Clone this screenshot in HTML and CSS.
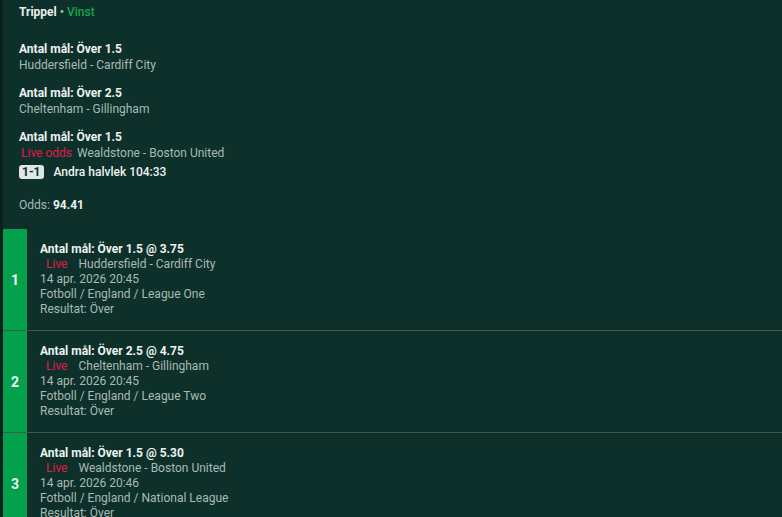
FILE: index.html
```html
<!DOCTYPE html>
<html lang="sv">
<head>
<meta charset="utf-8">
<link rel="stylesheet" href="styles.css">
</head>
<body>
<div class="page">
  <section class="summary">
    <div class="head"><span class="type">Trippel</span> <span class="dot">•</span> <span class="win">Vinst</span></div>
    <div class="sel">
      <div class="market">Antal mål: Över 1.5</div>
      <div class="match">Huddersfield - Cardiff City</div>
    </div>
    <div class="sel">
      <div class="market">Antal mål: Över 2.5</div>
      <div class="match">Cheltenham - Gillingham</div>
    </div>
    <div class="sel">
      <div class="market">Antal mål: Över 1.5</div>
      <div class="match"><span class="live-odds">Live odds</span> Wealdstone - Boston United</div>
      <div class="score-row"><span class="score">1-1</span><span class="period">Andra halvlek 104:33</span></div>
    </div>
    <div class="odds">Odds: <b>94.41</b></div>
  </section>
  <section class="legs">
    <div class="leg">
      <div class="num">1</div>
      <div class="info">
        <div class="title">Antal mål: Över 1.5 @ 3.75</div>
        <div class="line"><span class="live">Live</span>Huddersfield - Cardiff City</div>
        <div class="line">14 apr. 2026 20:45</div>
        <div class="line">Fotboll / England / League One</div>
        <div class="line">Resultat: Över</div>
      </div>
    </div>
    <div class="leg">
      <div class="num">2</div>
      <div class="info">
        <div class="title">Antal mål: Över 2.5 @ 4.75</div>
        <div class="line"><span class="live">Live</span>Cheltenham - Gillingham</div>
        <div class="line">14 apr. 2026 20:45</div>
        <div class="line">Fotboll / England / League Two</div>
        <div class="line">Resultat: Över</div>
      </div>
    </div>
    <div class="leg">
      <div class="num">3</div>
      <div class="info">
        <div class="title">Antal mål: Över 1.5 @ 5.30</div>
        <div class="line"><span class="live">Live</span>Wealdstone - Boston United</div>
        <div class="line">14 apr. 2026 20:46</div>
        <div class="line">Fotboll / England / National League</div>
        <div class="line">Resultat: Över</div>
      </div>
    </div>
  </section>
</div>
</body>
</html>
```

FILE: styles.css
```css
html, body {
  margin: 0;
  padding: 0;
  background: #0b211d;
}
body {
  font-family: Roboto, "Liberation Sans", Arial, sans-serif;
  font-size: 12px;
  color: #a9bab5;
}
.page {
  margin-left: 3px;
  background: #0d312a;
  min-height: 517px;
}
.summary {
  padding: 4px 16px 16px 16px;
}
.head {
  font-weight: 700;
  color: #e8eeec;
  line-height: 16px;
}
.dot { color: #a9bab5; }
.win { color: #16a551; font-weight: 500; }
.sel {
  margin-top: 12px;
}
.head + .sel { margin-top: 21px; }
.market {
  font-weight: 700;
  color: #eef2f1;
  line-height: 16px;
}
.match {
  line-height: 16px;
}
.live-odds {
  color: #e4164d;
  margin-left: 2px;
  margin-right: 2px;
}
.score-row {
  display: flex;
  align-items: center;
  gap: 10px;
  margin-top: 4px;
}
.score {
  background: #dfe6e4;
  color: #0d312a;
  font-weight: 700;
  border-radius: 3px;
  padding: 0 3px;
  line-height: 14px;
  height: 14px;
}
.period {
  color: #eef2f1;
  font-weight: 500;
}
.odds {
  margin-top: 18px;
  line-height: 16px;
}
.odds b { color: #eef2f1; }
.leg {
  display: flex;
  border-bottom: 1px solid #3c5a52;
  height: 101px;
}
.num {
  width: 24px;
  flex: none;
  background: #04a14d;
  color: #eef2f1;
  font-weight: 700;
  font-size: 14px;
  display: flex;
  align-items: center;
  justify-content: center;
}
.info {
  padding: 12px 13px 0 13px;
}
.title {
  font-weight: 700;
  color: #eef2f1;
  line-height: 16px;
}
.line {
  line-height: 15px;
}
.live {
  color: #e4164d;
  padding: 0 7px 0 6px;
  margin-right: 4px;
}
```
